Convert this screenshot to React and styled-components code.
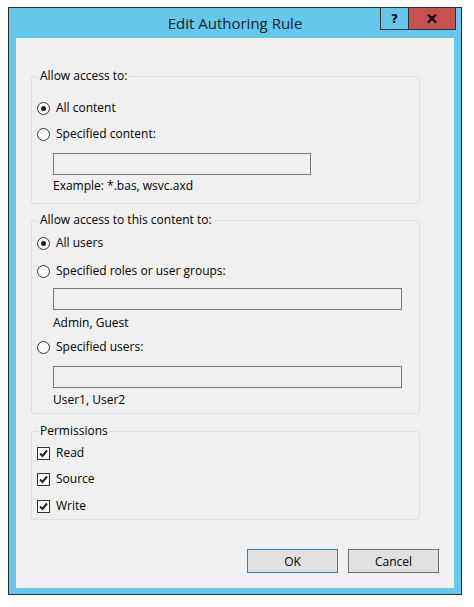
import React from "react";
import styled, { createGlobalStyle } from "styled-components";

const GlobalStyle = createGlobalStyle`
  html, body {
    margin: 0;
    padding: 0;
    background: #ffffff;
  }
  body {
    font-family: "Open Sans", "Noto Sans", sans-serif;
    font-size: 12px;
    color: #000;
  }
`;

const App = () => {
  return (
    <>
      <GlobalStyle />
      <Window>
        <TitleBar>
          <span />
          <Title>Edit Authoring Rule</Title>
          <CaptionButtons>
            <HelpButton>?</HelpButton>
            <CloseButton>
              <svg width="10" height="9" viewBox="0 0 10 9">
                <path d="M1 0.5 L9 8.5 M9 0.5 L1 8.5" stroke="#000" strokeWidth="2.2" />
              </svg>
            </CloseButton>
          </CaptionButtons>
        </TitleBar>
        <Client>
          <Group $height={128} $padTop={18}>
            <Legend>Allow access to:</Legend>
            <Row>
              <Radio $checked />
              <Label>All content</Label>
            </Row>
            <Row>
              <Radio />
              <Label>Specified content:</Label>
            </Row>
            <Input $width={258} $mt={6} />
            <Hint $mt={3}>Example: *.bas, wsvc.axd</Hint>
          </Group>

          <Group $height={194} $padTop={9} $mt={16}>
            <Legend>Allow access to this content to:</Legend>
            <Row>
              <Radio $checked />
              <Label>All users</Label>
            </Row>
            <Row $mt={2}>
              <Radio />
              <Label>Specified roles or user groups:</Label>
            </Row>
            <Input $width={349} $mt={4} />
            <Hint $mt={5}>Admin, Guest</Hint>
            <Row $mt={3}>
              <Radio />
              <Label>Specified users:</Label>
            </Row>
            <Input $width={349} $mt={6} />
            <Hint $mt={4}>User1, User2</Hint>
          </Group>

          <Group $height={89} $padTop={10} $mt={17}>
            <Legend>Permissions</Legend>
            {["Read", "Source", "Write"].map((p, idx) => (
              <CheckRow key={p} $mt={idx === 0 ? 0 : idx === 1 ? 4 : 5}>
                <CheckBox>
                  <svg width="11" height="11" viewBox="0 0 11 11">
                    <path d="M2 5.5 L4.5 8 L9 2.5" fill="none" stroke="#222" strokeWidth="2" />
                  </svg>
                </CheckBox>
                <Label>{p}</Label>
              </CheckRow>
            ))}
          </Group>

          <ButtonBar>
            <Button $primary>OK</Button>
            <Button>Cancel</Button>
          </ButtonBar>
        </Client>
      </Window>
    </>
  );
};

const Window = styled.div`
  box-sizing: border-box;
  margin: 7px 0 0 8px;
  width: 454px;
  height: 588px;
  border: 1px solid #2e2e2e;
  background: #65c8ea;
  display: flex;
  flex-direction: column;
`;

const TitleBar = styled.div`
  height: 30px;
  display: grid;
  grid-template-columns: 1fr auto 1fr;
  align-items: start;
  padding-right: 5px;
`;

const Title = styled.div`
  font-size: 15px;
  line-height: 30px;
  color: #14222b;
  white-space: nowrap;
  padding-left: 5px;
`;

const CaptionButtons = styled.div`
  justify-self: end;
  display: flex;
  border: 1px solid #2e2e2e;
  border-top: none;
  height: 21px;
`;

const HelpButton = styled.div`
  width: 27px;
  border-right: 1px solid #2e2e2e;
  display: flex;
  align-items: center;
  justify-content: center;
  font-family: "DejaVu Sans", sans-serif;
  font-weight: bold;
  font-size: 12px;
  color: #000;
`;

const CloseButton = styled.div`
  width: 46px;
  background: #c75050;
  display: flex;
  align-items: center;
  justify-content: center;
`;

const Client = styled.div`
  flex: 1;
  margin: 0 7px 6px 7px;
  background: #f0f0f0;
  padding: 38px 34px 15px 15px;
  display: flex;
  flex-direction: column;
`;

const Group = styled.div`
  position: relative;
  box-sizing: border-box;
  height: ${(p) => p.$height}px;
  margin-top: ${(p) => p.$mt || 0}px;
  border: 1px solid #d5dfe5;
  border-radius: 3px;
  padding: ${(p) => p.$padTop}px 0 0 5px;
  display: flex;
  flex-direction: column;
  align-items: flex-start;
`;

const Legend = styled.div`
  position: absolute;
  top: -9px;
  left: 6px;
  padding: 0 2px 0 2px;
  background: #f0f0f0;
  line-height: 16px;
  color: #000;
`;

const Row = styled.div`
  display: flex;
  align-items: center;
  height: 26px;
  margin-top: ${(p) => p.$mt || 0}px;
`;

const CheckRow = styled(Row)`
  height: 22px;
`;

const Radio = styled.span`
  box-sizing: border-box;
  width: 13px;
  height: 13px;
  border-radius: 50%;
  border: 1px solid #333;
  background: #fff;
  margin-right: 6px;
  display: flex;
  align-items: center;
  justify-content: center;
  &::after {
    content: "";
    width: 5px;
    height: 5px;
    border-radius: 50%;
    background: ${(p) => (p.$checked ? "#1a1a1a" : "transparent")};
  }
`;

const CheckBox = styled.span`
  box-sizing: border-box;
  width: 13px;
  height: 13px;
  border: 1px solid #333;
  background: #fff;
  margin-right: 6px;
  display: flex;
  align-items: center;
  justify-content: center;
`;

const Label = styled.span`
  line-height: 16px;
  white-space: nowrap;
`;

const Input = styled.div`
  box-sizing: border-box;
  width: ${(p) => p.$width}px;
  height: 22px;
  margin: ${(p) => p.$mt}px 0 0 16px;
  border: 1px solid #7a7a7a;
  background: #f0f0f0;
`;

const Hint = styled.div`
  margin: ${(p) => p.$mt}px 0 0 16px;
  line-height: 16px;
`;

const ButtonBar = styled.div`
  margin-top: auto;
  margin-right: -19px;
  display: flex;
  justify-content: flex-end;
  gap: 10px;
`;

const Button = styled.div`
  box-sizing: border-box;
  width: 91px;
  height: 24px;
  background: #e1e1e1;
  border: 1px solid ${(p) => (p.$primary ? "#3c7fb1" : "#707070")};
  display: flex;
  align-items: center;
  justify-content: center;
`;

export default App;
